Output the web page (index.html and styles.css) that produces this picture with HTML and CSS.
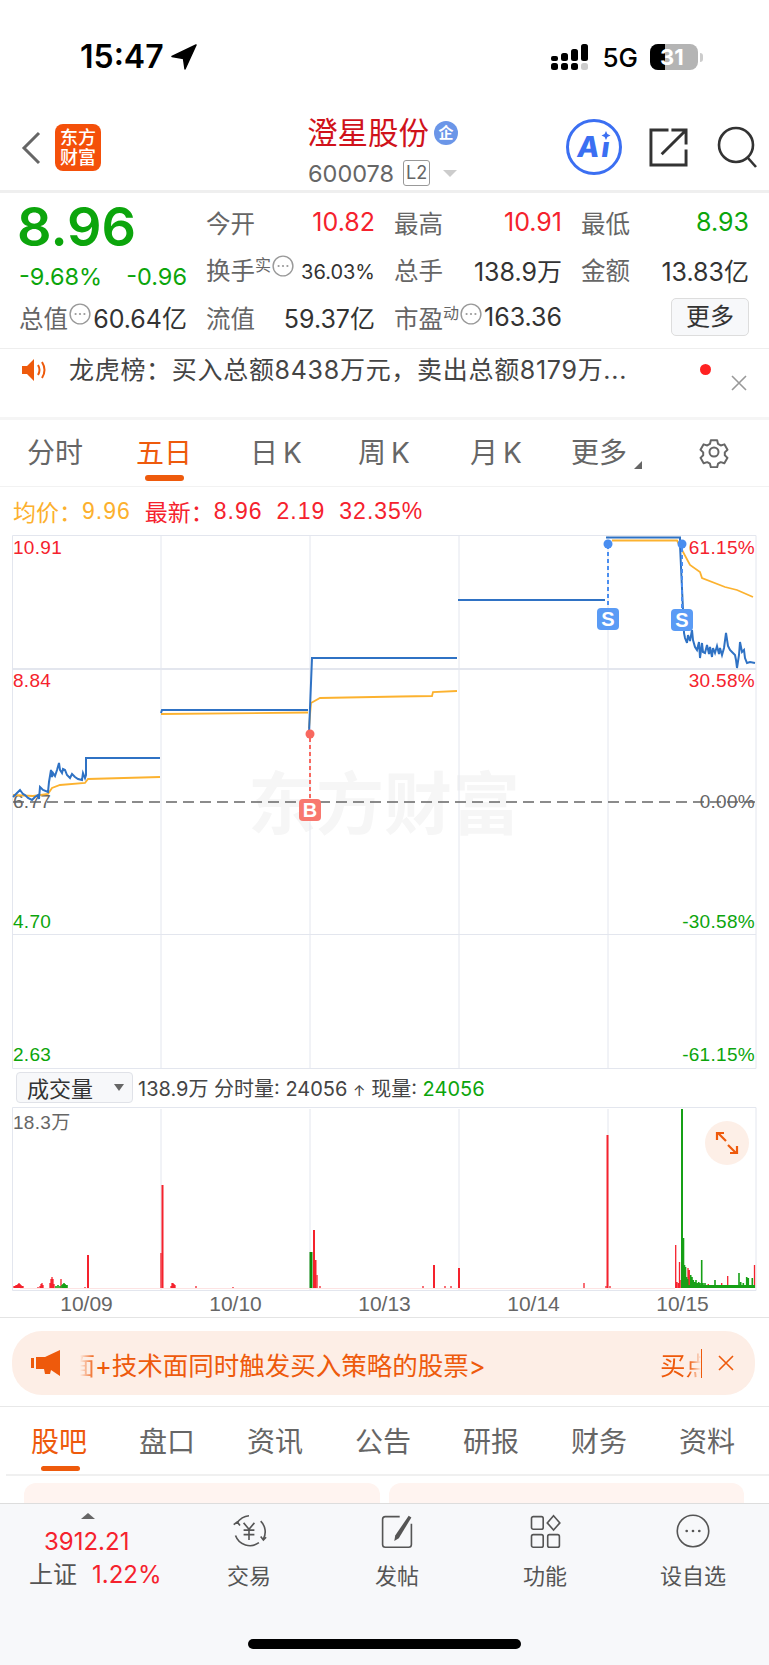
FILE: index.html
```html
<!DOCTYPE html>
<html lang="zh-CN">
<head>
<meta charset="utf-8">
<title>澄星股份</title>
<link rel="stylesheet" href="styles.css">
</head>
<body>
<svg class="defs" width="0" height="0" aria-hidden="true">
  <symbol id="more" viewBox="0 0 20 20">
    <circle cx="10" cy="10" r="9" fill="none" stroke="#999" stroke-width="1.3"/>
    <circle cx="6" cy="10" r="1" fill="#999"/><circle cx="10" cy="10" r="1" fill="#999"/><circle cx="14" cy="10" r="1" fill="#999"/>
  </symbol>
</svg>
<main class="page">
  <div class="status">
    <div class="status-left">
      <span class="time">15:47</span>
      <svg class="loc" viewBox="0 0 26 26"><path d="M25 1 1 12.5 12.5 14.5 14 25Z" fill="#000" stroke="#000" stroke-width="1.5" stroke-linejoin="round"/></svg>
    </div>
    <div class="status-right">
      <svg class="signal" viewBox="0 0 38 26">
        <g fill="#000"><rect x="0" y="12" width="7" height="5" rx="2"/><rect x="0" y="19" width="7" height="7" rx="2.5"/><rect x="10" y="9" width="7" height="8" rx="2.5"/><rect x="10" y="19" width="7" height="7" rx="2.5"/><rect x="20" y="5" width="7" height="12" rx="2.5"/><rect x="20" y="19" width="7" height="7" rx="2.5"/><rect x="30" y="0" width="7" height="17" rx="2.5"/></g>
        <rect x="30" y="19" width="7" height="7" rx="2.5" fill="#ccc"/>
      </svg>
      <span class="net">5G</span>
      <div class="battery"><span class="battery-fill"></span><span class="battery-num">31</span></div>
      <span class="battery-nub"></span>
    </div>
  </div>

  <header class="header">
    <svg class="back" viewBox="0 0 20 34"><path d="M18 2 3 17l15 15" fill="none" stroke="#666" stroke-width="3"/></svg>
    <div class="logo"><span>东方</span><span>财富</span></div>
    <div class="title">
      <div class="title-name"><span class="name">澄星股份</span><span class="zheng">企</span></div>
      <div class="title-code"><span class="code">600078</span><span class="l2">L2</span><span class="tri-down"></span></div>
    </div>
    <div class="header-icons">
      <svg class="ai" viewBox="0 0 56 56"><circle cx="28" cy="28" r="26.5" fill="none" stroke="#3b6ff2" stroke-width="3"/><text transform="translate(10 38) skewX(-8)" x="0" y="0" class="ai-text">Ai</text><rect x="34" y="12" width="12" height="11" fill="#fff"/><path d="M40 12l1.400 3.100L44.500 16.500l-3.100 1.400L40 21l-1.400-3.100L35.500 16.500l3.100-1.400Z" fill="#3b6ff2"/></svg>
      <svg class="share" viewBox="0 0 40 40"><path d="M20 2H2v36h36V22M13 27 37 3M23 2h15v15" fill="none" stroke="#333" stroke-width="3"/></svg>
      <svg class="search" viewBox="0 0 40 42"><circle cx="19" cy="19" r="17" fill="none" stroke="#333" stroke-width="2.600"/><path d="M31 32l8 9" stroke="#333" stroke-width="2.600"/></svg>
    </div>
  </header>

  <section class="quote">
    <div class="quote-left">
      <div class="price">8.96</div>
      <div class="change"><span>-9.68%</span><span>-0.96</span></div>
      <div class="cell"><span class="lbl">总值<svg class="more up"><use href="#more"/></svg></span><span class="val">60.64亿</span></div>
    </div>
    <div class="quote-grid">
      <div class="cell"><span class="lbl">今开</span><span class="val red">10.82</span></div>
      <div class="cell"><span class="lbl">最高</span><span class="val red">10.91</span></div>
      <div class="cell"><span class="lbl">最低</span><span class="val green">8.93</span></div>
      <div class="cell"><span class="lbl">换手<sup class="sup">实</sup><svg class="more up"><use href="#more"/></svg></span><span class="val small">36.03%</span></div>
      <div class="cell"><span class="lbl">总手</span><span class="val">138.9万</span></div>
      <div class="cell"><span class="lbl">金额</span><span class="val">13.83亿</span></div>
      <div class="cell"><span class="lbl">流值</span><span class="val">59.37亿</span></div>
      <div class="cell"><span class="lbl">市盈<sup class="sup">动</sup><svg class="more up"><use href="#more"/></svg></span><span class="val">163.36</span></div>
      <div class="cell end"><span class="more-btn">更多</span></div>
    </div>
  </section>

  <section class="notice">
    <svg class="speaker" viewBox="0 0 26 24"><path d="M0 8h5l7-7v22l-7-7H0Z" fill="#ee5a0c"/><path d="M16 7q3 5 0 10M20 4q5 8 0 16" fill="none" stroke="#ee5a0c" stroke-width="2"/></svg>
    <span class="notice-text">龙虎榜：买入总额8438万元，卖出总额8179万...</span>
    <span class="dot"></span>
    <svg class="notice-x" viewBox="0 0 16 16"><path d="M1 1l14 14M15 1 1 15" stroke="#999" stroke-width="1.600"/></svg>
  </section>

  <nav class="tabs">
    <span class="tab tab-1">分时</span>
    <span class="tab tab-2 on">五日</span>
    <span class="tab tab-3">日 K</span>
    <span class="tab tab-4">周 K</span>
    <span class="tab tab-5">月 K</span>
    <span class="tab tab-6">更多<i class="corner"></i></span>
    <svg class="gear" viewBox="0 0 32 32"><path d="M12.500 3h7l1 4 3 1.700 4-1.200 3.500 6-3 2.900v3.200l3 2.900-3.500 6-4-1.200-3 1.700-1 4h-7l-1-4-3-1.700-4 1.200-3.500-6 3-2.900v-3.200l-3-2.900 3.500-6 4 1.200 3-1.700Z" transform="translate(1.600 1.600) scale(.9)" fill="none" stroke="#666" stroke-width="2.200" stroke-linejoin="round"/><circle cx="16" cy="16" r="4.500" fill="none" stroke="#666" stroke-width="2"/></svg>
  </nav>

  <div class="legend">
    <span class="avg label">均价：</span><span class="avg num-a">9.96</span>
    <span class="new label">最新：</span><span class="new">8.96</span><span class="new">2.19</span><span class="new">32.35%</span>
  </div>

  <svg class="chart" viewBox="0 535 769 535" width="769" height="535">
    <text x="384" y="829" class="mark">东方财富</text>
    <g class="grid">
      <path d="M12.500 535.500H756V1068.500H12.500Z"/>
      <path d="M12.500 669H756" class="grid-strong"/>
      <path d="M12.500 934.500H756"/>
      <path d="M161 536V1068M310 536V1068M459 536V1068M608 536V1068"/>
    </g>
    <text x="13" y="554" class="ax red-t">10.91</text>
    <text x="13" y="687" class="ax red-t">8.84</text>
    <text x="13" y="808" class="ax gray-t">6.77</text>
    <text x="13" y="928" class="ax green-t">4.70</text>
    <text x="13" y="1061" class="ax green-t">2.63</text>
    <text x="755" y="554" class="ax end red-t">61.15%</text>
    <text x="755" y="687" class="ax end red-t">30.58%</text>
    <text x="755" y="808" class="ax end gray-t">0.00%</text>
    <text x="755" y="928" class="ax end green-t">-30.58%</text>
    <text x="755" y="1061" class="ax end green-t">-61.15%</text>
    <path d="M13 802H755" class="zero"/>
    <g class="l-avg">
      <path d="M13 795 33 796 48 794 52 788 60 785 85 783 88 779 160 777"/>
      <path d="M161 714 308 712.500"/>
      <path d="M309 728 311 703 320 698 400 696.500 432 696 433 692 457 691"/>
      <path d="M612 540.500H677L682 550 690 565 700 572 702 578 725 587 737 590 753 597"/>
    </g>
    <g class="l-price">
      <path d="M13 797 16 794 20 790 23 794 25 795 28 798 32 800 35 797 38 795 39 799 40 787 43 790 48 792 49 782 51 770 52 777 53 773 55 776 57 770 59 763 60 770 62 773 63 769 65 770 67 775 70 778 72 774 75 777 78 779 82 780 83 773 85 778 86 775 86 758H160"/>
      <path d="M161 713 162 710H308"/>
      <path d="M309 733 312 658H457"/>
      <path d="M458 600H605"/>
      <path d="M606 537.500H680V545L683 610 684 633 685 638 687 643 688 635 690 641 692 630 693 640 695 647 697 650 699 642 700 658 702 643 703 652 705 653 707 645 709 654 710 647 712 657 713 648 715 653 717 646 719 654 720 648 722 655 724 648 726 633 728 646 730 650 732 652 735 655 736 660 737 668 739 655 740 642 742 652 744 650 745 658 747 663 750 662 755 663"/>
    </g>
    <path d="M310 738V800" class="dash-r"/>
    <path d="M608 545V608M682 548V610" class="dash-b"/>
    <circle cx="310" cy="734" r="4.500" fill="#f8685f"/>
    <circle cx="608" cy="544" r="4.500" fill="#4a8ef0"/>
    <circle cx="682" cy="544" r="4.500" fill="#4a8ef0"/>
    <rect x="299" y="799" width="22" height="22" rx="4" fill="#f8786f"/>
    <text x="310" y="817" class="badge">B</text>
    <rect x="597" y="608" width="22" height="22" rx="4" fill="#5a9bf5"/>
    <text x="608" y="626" class="badge">S</text>
    <rect x="671" y="609" width="22" height="22" rx="4" fill="#5a9bf5"/>
    <text x="682" y="627" class="badge">S</text>
  </svg>

  <div class="vol-row">
    <div class="vol-select"><span>成交量</span><i class="tri-small"></i></div>
    <div class="vol-info">138.9万 分时量: 24056 <span class="arrow">↑</span> 现量: <span class="green">24056</span></div>
  </div>

  <svg class="vol" viewBox="0 1107 769 184" width="769" height="184">
    <g class="grid">
      <path d="M12.500 1107.500H756V1290.500H12.500Z"/>
      <path d="M161 1109V1290M310 1109V1290M459 1109V1290M608 1109V1290"/>
    </g>
    <text x="13" y="1129" class="ax gray-t">18.3万</text>
    <path d="M20 1288.500H675" class="v-pale"/>
    <path d="M14 1288V1286M15 1288V1286M16 1288V1285M17 1288V1285M18 1288V1284M19 1288V1283M20 1288V1284M21 1288V1285M22 1288V1286M23 1288V1286M38 1288V1287M40 1288V1286M41 1288V1284M42 1288V1283M43 1288V1285M50 1288V1283M51 1288V1279M52 1288V1277M53 1288V1279M54 1288V1284M61 1288V1279M85 1288V1287M233 1288V1287M196 1288V1286M171 1288V1286M172 1288V1283M173 1288V1283M174 1288V1284M175 1288V1285M320 1288V1286M584 1288V1283M606 1288V1286M610 1288V1286M423 1288V1286M445 1288V1286M451 1288V1286M161 1288V1253M317 1288V1275" class="v-red1"/>
    <path d="M56 1288V1286M58 1288V1285M60 1288V1286M62 1288V1285M63 1288V1284M64 1288V1283M65 1288V1284M66 1288V1285M67 1288V1285" class="v-green1"/>
    <path d="M88 1288V1255M162.500 1288V1185M314 1288V1230M315.500 1288V1260M434 1288V1265M459 1288V1268M607.500 1288V1135" class="v-red2"/>
    <path d="M311 1288V1252" class="v-green3"/>
    <path d="M675.700 1288V1245M677 1288V1282M678.500 1288V1283M679.500 1288V1262M681 1288V1280M688 1288V1268M689.300 1288V1270M708.300 1288V1284M721.700 1288V1283M727.700 1288V1276M754.500 1288V1265" class="v-red1"/>
    <path d="M682 1288V1109" class="v-green2"/>
    <path d="M683.500 1288V1238M684.500 1288V1265M685.500 1288V1267M686.700 1288V1277M687.700 1288V1279M690.700 1288V1275M692 1288V1277M693.300 1288V1280M694.700 1288V1282M696 1288V1280M697.300 1288V1283M698.700 1288V1282M700 1288V1283M701.700 1288V1260M703 1288V1283M705 1288V1283M710 1288V1285M715 1288V1280M716.700 1288V1285M720 1288V1285M725 1288V1286M730 1288V1286M736.700 1288V1285M739 1288V1273M740.700 1288V1282M743.300 1288V1283M746.700 1288V1277M748.300 1288V1278M750 1288V1285M752.300 1288V1278" class="v-green1"/>
    <path d="M683 1286.500H755" class="v-base"/>
    <circle cx="727" cy="1143" r="22" fill="#fdefe7"/>
    <path d="M718 1133l8 8M717 1140v-7h7M736 1153l-8-8M737 1146v7h-7" fill="none" stroke="#ee5a0c" stroke-width="2.200"/>
  </svg>

  <div class="dates"><span>10/09</span><span>10/10</span><span>10/13</span><span>10/14</span><span>10/15</span></div>

  <div class="banner-wrap">
    <div class="banner">
      <svg class="horn" viewBox="0 0 30 26"><path d="M0 8h3v10H0ZM5 7h9L29 0v26L20 20l-1 4h-5l-1-5H5Z" fill="#ee5a0c"/></svg>
      <div class="banner-text"><span class="fade-l">面</span><span>+技术面同时触发买入策略的股票&gt;</span></div>
      <span class="banner-next">买点</span>
      <span class="banner-sep"></span>
      <svg class="banner-x" viewBox="0 0 16 16"><path d="M1 1l14 14M15 1 1 15" stroke="#ee5a0c" stroke-width="1.600"/></svg>
    </div>
  </div>

  <nav class="tabs2">
    <span class="tab2 on">股吧</span><span class="tab2">盘口</span><span class="tab2">资讯</span><span class="tab2">公告</span><span class="tab2">研报</span><span class="tab2">财务</span><span class="tab2">资料</span>
  </nav>

  <div class="peek"><div class="peek-card"></div><div class="peek-card"></div></div>

  <footer class="bar">
    <div class="bar-row">
      <div class="index">
        <i class="tri-up"></i>
        <div class="index-val">3912.21</div>
        <div class="index-line"><span class="index-name">上证</span><span class="index-pct">1.22%</span></div>
      </div>
      <div class="bar-item">
        <svg class="bar-ico" viewBox="0 0 40 40"><path d="M7 11A17 17 0 0 1 20 3M33 9a17 17 0 0 1 3 20M31 33A17 17 0 0 1 5 25" fill="none" stroke="#555" stroke-width="1.800"/><path d="M3 13l4-3 3 4M33 26l3 4 3-3" fill="none" stroke="#555" stroke-width="1.800"/><path d="M14 11l6 7 6-7M20 18v12M14 19h12M14 24h12" fill="none" stroke="#555" stroke-width="1.800"/></svg>
        <span>交易</span>
      </div>
      <div class="bar-item">
        <svg class="bar-ico" viewBox="0 0 40 40"><path d="M23 4H7a3 3 0 0 0-3 3v28a3 3 0 0 0 3 3h26a3 3 0 0 0 3-3V12" fill="none" stroke="#555" stroke-width="1.800"/><path d="M18 25 33 3l3 2-14 23-5 3Z" fill="#555"/></svg>
        <span>发帖</span>
      </div>
      <div class="bar-item">
        <svg class="bar-ico" viewBox="0 0 40 40"><g fill="none" stroke="#555" stroke-width="1.800"><rect x="5" y="4" width="13" height="14" rx="2"/><rect x="5" y="24" width="13" height="14" rx="2"/><rect x="23" y="24" width="13" height="14" rx="2"/><path d="M29.500 3l7 8-7 8-7-8Z"/></g></svg>
        <span>功能</span>
      </div>
      <div class="bar-item">
        <svg class="bar-ico" viewBox="0 0 40 40"><circle cx="20" cy="20" r="17.500" fill="none" stroke="#555" stroke-width="1.800"/><circle cx="13" cy="20" r="1.500" fill="#555"/><circle cx="20" cy="20" r="1.500" fill="#555"/><circle cx="27" cy="20" r="1.500" fill="#555"/></svg>
        <span>设自选</span>
      </div>
    </div>
    <div class="home"></div>
  </footer>
</main>
</body>
</html>
```

FILE: styles.css
```css
* { box-sizing: border-box; }
html, body { margin: 0; padding: 0; background: #fff; }
body { font-family: Inter, "Noto Sans CJK SC", sans-serif; color: #333; }
.defs { position: absolute; }
.page { width: 769px; height: 1665px; overflow: hidden; display: flex; flex-direction: column; }
i { font-style: normal; display: block; }
svg { display: block; flex: none; }
.red { color: #f5222d; }
.green { color: #0ca50c; }

/* status bar */
.status { height: 110px; flex: none; display: flex; justify-content: space-between; align-items: flex-start; padding: 42px 66px 0 80px; }
.status-left { display: flex; align-items: center; gap: 7px; height: 30px; }
.time { font-size: 32px; font-weight: 600; color: #000; line-height: 30px; }
.loc { width: 26px; height: 26px; }
.status-right { display: flex; align-items: center; height: 30px; }
.signal { width: 38px; height: 26px; }
.net { margin-left: 13px; font-size: 26px; font-weight: 500; color: #000; }
.battery { margin-left: 12px; width: 48px; height: 26px; border-radius: 8px; background: #b4b4b4; overflow: hidden; display: flex; align-items: center; position: relative; }
.battery-fill { width: 15px; height: 26px; background: #000; }
.battery-num { position: absolute; left: 10px; top: 0; font-size: 22px; line-height: 26px; font-weight: 700; color: #fff; }
.battery-nub { width: 3px; height: 9px; margin-left: 2px; background: #ccc; border-radius: 0 3px 3px 0; }

/* header */
.header { height: 83px; flex: none; display: flex; align-items: flex-start; border-bottom: 3px solid #efefef; position: relative; }
.back { width: 20px; height: 34px; margin: 21px 0 0 21px; }
.logo { width: 46px; height: 47px; margin: 14px 0 0 14px; border-radius: 8px; background: #f4500a; color: #fff; font-size: 18px; font-weight: 500; line-height: 20px; display: flex; flex-direction: column; align-items: center; justify-content: center; }
.title { margin-left: 207px; width: 200px; }
.title-name { display: flex; align-items: center; height: 46px; margin-left: -1px; }
.name { font-size: 30.500px; line-height: 46px; color: #d0121b; }
.zheng { width: 24px; height: 24px; border-radius: 50%; margin-left: 5px; background: #6b96e8; color: #fff; font-size: 15px; font-weight: 700; line-height: 24px; text-align: center; }
.title-code { display: flex; align-items: center; height: 36px; margin-top: -1px; }
.code { font-size: 23.500px; color: #666; }
.l2 { width: 27px; height: 26px; margin-left: 9px; border: 1px solid #999; border-radius: 3px; font-size: 18px; line-height: 24px; text-align: center; color: #666; }
.tri-down { width: 0; height: 0; margin-left: 13px; border: 7px solid transparent; border-top: 7px solid #ccc; border-bottom: 0; }
.header-icons { position: absolute; left: 566px; top: 9px; display: flex; align-items: center; }
.ai { width: 56px; height: 56px; }
.ai-text { font-size: 29px; font-weight: 800; letter-spacing: 2px; fill: #3b6ff2; }
.share { width: 39px; height: 39px; margin-left: 27px; }
.search { width: 40px; height: 42px; margin-left: 29px; }

/* quote */
.quote { height: 156px; flex: none; display: flex; padding: 5px 19px 0; border-bottom: 1px solid #eee; }
.quote-left { width: 168px; flex: none; }
.price { font-size: 54px; font-weight: 600; line-height: 56px; color: #0ca50c; margin: 1px 0 0 -2px; }
.change { display: flex; justify-content: space-between; height: 38px; font-size: 23.500px; line-height: 44px; color: #0ca50c; white-space: nowrap; }
.cell { display: flex; justify-content: space-between; align-items: center; height: 48px; font-size: 25px; white-space: nowrap; }
.cell.end { justify-content: flex-end; }
.lbl { color: #666; display: flex; align-items: center; font-size: 24.500px; }
.val { color: #333; }
.val.red { color: #f5222d; }
.val.green { color: #0ca50c; }
.val.small { font-size: 20px; margin-top: 4px; }
.sup { font-size: 16px; line-height: 16px; align-self: flex-start; margin-top: 5px; }
.more { width: 22px; height: 22px; margin-left: 1px; }
.more.up { align-self: flex-start; margin-top: 3px; }
.quote-grid { margin-left: 19px; display: grid; grid-template-columns: 169px 168px 168px; column-gap: 19px; grid-auto-rows: 47.500px; }
.more-btn { width: 78px; height: 38px; border: 1px solid #ddd; border-radius: 5px; background: #f7f8fa; color: #333; font-size: 24px; line-height: 36px; text-align: center; }

/* notice */
.notice { height: 71px; flex: none; display: flex; align-items: flex-start; padding: 9px 0 0 22px; border-bottom: 3px solid #f5f5f5; }
.speaker { width: 26px; height: 24px; }
.notice-text { margin-left: 21px; width: 631px; font-size: 25px; line-height: 24px; letter-spacing: .7px; color: #444; white-space: nowrap; }
.dot { width: 11px; height: 11px; margin: 6px 0 0 0; border-radius: 50%; background: #f22; flex: none; }
.notice-x { width: 16px; height: 16px; margin: 17px 0 0 20px; }

/* tabs */
.tabs { height: 67px; flex: none; position: relative; display: flex; border-bottom: 1px solid #f2f2f2; font-size: 28px; color: #666; }
.tab { position: absolute; top: 15px; line-height: 36px; white-space: nowrap; word-spacing: -3px; }
.tab-1 { left: 27px; } .tab-2 { left: 136px; } .tab-3 { left: 250px; } .tab-4 { left: 358px; } .tab-5 { left: 470px; } .tab-6 { left: 571px; }
.tab.on { color: #ee5a0c; }
.tab.on::after { content: ""; position: absolute; left: 9px; top: 40px; width: 39px; height: 6px; border-radius: 3px; background: #ee5a0c; }
.corner { position: absolute; left: 63px; top: 26px; width: 0; height: 0; border-left: 8px solid transparent; border-bottom: 8px solid #666; }
.gear { position: absolute; left: 698px; top: 16px; width: 32px; height: 32px; }

/* legend */
.legend { height: 48px; flex: none; display: flex; align-items: center; padding: 0 0 0 13px; font-family: "Liberation Sans", "Noto Sans CJK SC", sans-serif; font-size: 23px; letter-spacing: 1px; white-space: nowrap; }
.avg { color: #fcb02e; }
.new { color: #f5222d; margin-right: 14px; }
.label { letter-spacing: 0; }
.new.label { margin-right: 0; }
.num-a { margin-right: 14px; }

/* chart */
.chart { flex: none; }
.mark { font-size: 68px; font-weight: 700; fill: #f6f6f6; text-anchor: middle; }
.grid path { fill: none; stroke: #e3e6ee; stroke-width: 1; }
.grid .grid-strong { stroke-width: 2; }
.ax { font-family: "Liberation Sans", "Noto Sans CJK SC", sans-serif; font-size: 19px; letter-spacing: .3px; }
.ax.end { text-anchor: end; }
.red-t { fill: #f5222d; }
.green-t { fill: #0ca50c; }
.gray-t { fill: #666; }
.zero { stroke: #666; stroke-width: 1.500; stroke-dasharray: 11 6; fill: none; }
.l-avg path { fill: none; stroke: #fcb22f; stroke-width: 1.800; }
.l-price path { fill: none; stroke: #2f72c4; stroke-width: 2; }
.dash-r { stroke: #f8685f; stroke-width: 2; stroke-dasharray: 4 3; fill: none; }
.dash-b { stroke: #4a8ef0; stroke-width: 2; stroke-dasharray: 4 3; fill: none; }
.badge { font-family: "Liberation Sans", sans-serif; font-size: 20px; font-weight: 700; fill: #fff; text-anchor: middle; }

/* volume */
.vol-row { height: 37px; flex: none; display: flex; align-items: center; padding: 0 0 3px 16px; }
.vol-select { width: 117px; height: 31px; border: 1px solid #e0e2e8; border-radius: 4px; background: #f7f8fa; display: flex; align-items: center; padding-left: 10px; font-size: 22px; color: #333; }
.tri-small { width: 0; height: 0; margin-left: 21px; border: 5px solid transparent; border-top: 7px solid #666; border-bottom: 0; }
.vol-info { margin-left: 5px; font-size: 20px; color: #444; white-space: nowrap; }
.arrow { font-size: 15px; }
.vol { flex: none; }
.v-pale { stroke: #fde3e3; stroke-width: 1; fill: none; }
.v-base { stroke: #16a016; stroke-width: 3; fill: none; }
.v-red1 { stroke: #f5222d; stroke-width: 1.300; fill: none; }
.v-green1 { stroke: #16a016; stroke-width: 1.600; fill: none; }
.v-red2 { stroke: #f5222d; stroke-width: 2; fill: none; }
.v-green2 { stroke: #16a016; stroke-width: 2; fill: none; }
.v-green3 { stroke: #0c8a0c; stroke-width: 3; fill: none; }

.dates { height: 27px; flex: none; display: grid; grid-template-columns: repeat(5, 149px); padding-left: 12px; font-family: "Liberation Sans", sans-serif; font-size: 21px; line-height: 25px; color: #666; text-align: center; border-bottom: 1px solid #e4e4e4; }

/* banner */
.banner-wrap { height: 89px; flex: none; padding: 13px 14px 0 12px; border-bottom: 1px solid #e8e8e8; }
.banner { height: 64px; border-radius: 30px; background: #fdeee6; display: flex; align-items: center; padding-left: 19px; color: #ee5a0c; font-size: 25.500px; white-space: nowrap; }
.horn { width: 30px; height: 26px; }
.banner-text { margin-left: 19px; width: 420px; display: flex; }
.fade-l { width: 15px; overflow: hidden; direction: rtl; -webkit-mask-image: linear-gradient(to right, transparent, #000); mask-image: linear-gradient(to right, transparent, #000); }
.banner-next { margin-left: 160px; width: 41px; overflow: hidden; flex: none; -webkit-mask-image: linear-gradient(to right, #000 70%, transparent); mask-image: linear-gradient(to right, #000 70%, transparent); }
.banner-sep { width: 1px; height: 29px; background: #ee5a0c; flex: none; }
.banner-x { width: 16px; height: 16px; margin-left: 16px; }

/* tabs 2 */
.tabs2 { height: 69px; flex: none; margin-left: 6px; padding-left: 25px; display: flex; gap: 52px; border-bottom: 2px solid #f0f0f0; font-size: 28px; color: #666; }
.tab2 { position: relative; white-space: nowrap; height: 64px; line-height: 50px; padding-top: 10px; }
.tab2.on { color: #ee5a0c; }
.tab2.on::after { content: ""; position: absolute; left: 10px; top: 59px; width: 39px; height: 5px; border-radius: 3px; background: #ee5a0c; }

.peek { height: 27px; flex: none; display: flex; gap: 9px; padding: 7px 25px 0 24px; }
.peek-card { flex: 1; border-radius: 12px 12px 0 0; background: #fff4f0; }

/* bottom bar */
.bar { flex: 1; background: #f7f8fa; border-top: 1px solid #ddd; display: flex; flex-direction: column; }
.bar-row { display: flex; height: 135px; flex: none; }
.index { width: 173px; flex: none; padding: 9px 0 0 29px; position: relative; }
.tri-up { width: 0; height: 0; margin-left: 52px; border: 7px solid transparent; border-bottom: 6px solid #666; border-top: 0; }
.index-val { margin: 8px 0 0 15px; font-size: 24px; line-height: 30px; color: #f5222d; }
.index-line { display: flex; gap: 15px; font-size: 24px; line-height: 36px; }
.index-name { color: #555; }
.index-pct { color: #f5222d; }
.bar-item { width: 148px; flex: none; display: flex; flex-direction: column; align-items: center; padding-top: 9px; font-size: 22px; line-height: 36px; color: #555; }
.bar-ico { width: 36px; height: 36px; margin-bottom: 9px; }
.bar-item:nth-child(2) { margin-left: 2px; }
.home { width: 273px; height: 10px; margin: 0 0 0 248px; border-radius: 5px; background: #000; }
```
